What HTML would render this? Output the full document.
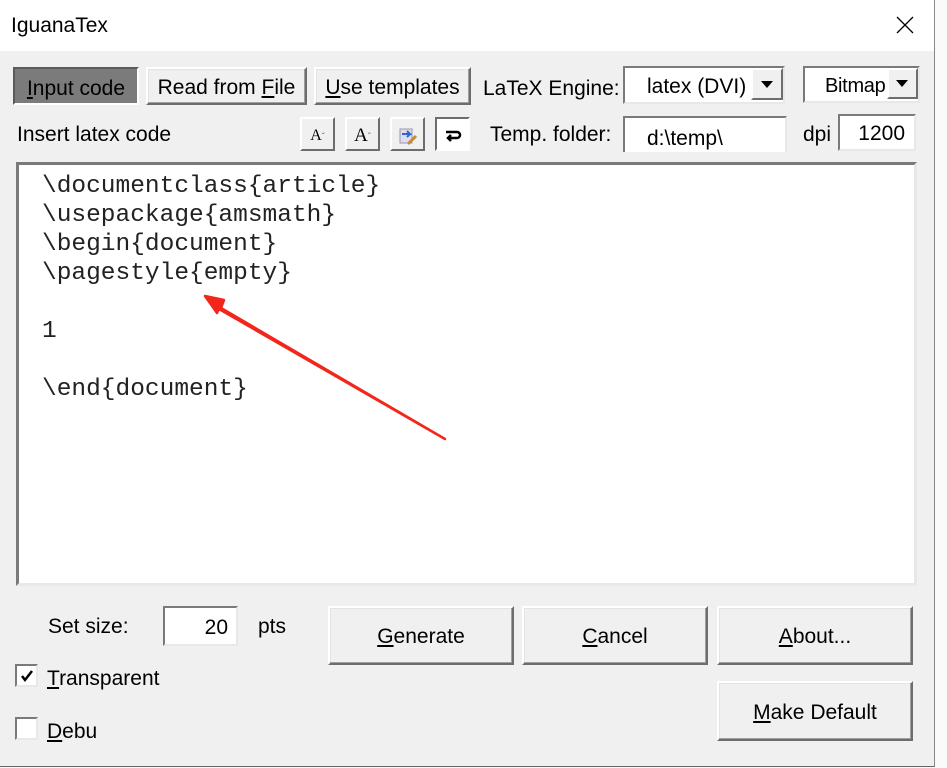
<!DOCTYPE html>
<html><head><meta charset="utf-8"><style>
*{box-sizing:border-box;margin:0;padding:0}
body{width:947px;height:768px;background:#fafafa;position:relative;overflow:hidden;font-family:"Liberation Sans",sans-serif;font-size:21px;color:#000}
.win{position:absolute;left:0;top:0;width:935px;height:767px;background:#f0f0f0;border-right:1px solid #888;border-bottom:1px solid #666}
.title{position:absolute;left:0;top:0;width:934px;height:51px;background:#fff}
.a{position:absolute;white-space:nowrap}
.btn{position:absolute;background:#f0f0f0;border:2px solid;border-color:#fff #6d6d6d #6d6d6d #fff;box-shadow:inset -1px -1px 0 #a0a0a0, inset 1px 1px 0 #e3e3e3;display:flex;align-items:center;justify-content:center;font-size:21px;padding-top:3px}
.inp{position:absolute;background:#fff;border:2px solid;border-color:#7a7a7a #e8e8e8 #e8e8e8 #7a7a7a;font-size:21px;display:flex;align-items:center;padding-top:3px}
u{text-decoration:underline}
.code{position:absolute;left:42px;top:172px;font-family:"Liberation Mono",monospace;font-size:24.5px;line-height:29px;color:#222;white-space:pre}
.dd{position:absolute;background:#f0f0f0;border:2px solid;border-color:#fff #6d6d6d #6d6d6d #fff}
</style></head><body>
<div class="win">
<div class="title"></div>
<div class="a" style="left:11px;top:14px;font-size:21px">IguanaTex</div>
<svg class="a" style="left:896px;top:16px" width="18" height="18"><path d="M1 1L17 17M17 1L1 17" stroke="#000" stroke-width="1.3"/></svg>

<div class="btn" style="left:13px;top:67px;width:126px;height:38px;background:#7b7b7b;border-color:#5a5a5a #fff #fff #5a5a5a;box-shadow:none;padding-top:6px"><span><u>I</u>nput code</span></div>
<div class="btn" style="left:146px;top:67px;width:161px;height:38px"><span>Read from <u>F</u>ile</span></div>
<div class="btn" style="left:314px;top:67px;width:157px;height:38px"><span><u>U</u>se templates</span></div>
<div class="a" style="left:483px;top:77px">LaTeX Engine:</div>
<div class="inp" style="left:623px;top:66px;width:162px;height:38px;padding-left:22px">latex (DVI)</div>
<div class="dd" style="left:751px;top:68px;width:32px;height:32px"><svg width="28" height="28"><path d="M8 11h12l-6 7z" fill="#000"/></svg></div>
<div class="inp" style="left:803px;top:66px;width:117px;height:37px;padding-left:20px;font-size:20px;letter-spacing:-0.3px">Bitmap</div>
<div class="dd" style="left:887px;top:68px;width:31px;height:31px"><svg width="27" height="27"><path d="M7 10h12l-6 7z" fill="#000"/></svg></div>

<div class="a" style="left:17px;top:123px">Insert latex code</div>
<div class="btn" style="left:300px;top:117px;width:35px;height:34px;font-family:'Liberation Serif',serif;font-size:16px;box-shadow:none">A<span style="font-size:9px;color:#36c;vertical-align:top">ˇ</span></div>
<div class="btn" style="left:345px;top:117px;width:35px;height:34px;font-family:'Liberation Serif',serif;font-size:19px;box-shadow:none">A<span style="font-size:9px;color:#36c;vertical-align:top">ˆ</span></div>
<div class="btn" style="left:390px;top:117px;width:35px;height:34px;box-shadow:none"><svg width="20" height="20"><rect x="2" y="3" width="12" height="14" fill="#dde" stroke="#99a"/><path d="M4 8h8l-3-3M12 8l-3 3" stroke="#36c" stroke-width="2" fill="none"/><path d="M10 18l8-8" stroke="#c83" stroke-width="3"/></svg></div>
<div class="btn" style="left:435px;top:117px;width:35px;height:34px;border-color:#6d6d6d #fff #fff #6d6d6d;box-shadow:none;background:#fff"><svg width="18" height="14"><path d="M2 3h11a3 3 0 0 1 0 6H5M7 6l-3 3 3 3" stroke="#000" stroke-width="2.5" fill="none"/></svg></div>
<div class="a" style="left:490px;top:123px">Temp. folder:</div>
<div class="inp" style="left:623px;top:116px;width:164px;height:36px;padding-left:22px;border-bottom:none;padding-top:8px">d:\temp\</div>
<div class="a" style="left:803px;top:123px">dpi</div>
<div class="inp" style="left:838px;top:114px;width:78px;height:37px;justify-content:flex-end;padding-right:9px">1200</div>

<div class="inp" style="left:16px;top:162px;width:901px;height:424px;border-width:3px;border-color:#7a7a7a #e8e8e8 #e8e8e8 #7a7a7a"></div>
<div class="code">\documentclass{article}
\usepackage{amsmath}
\begin{document}
\pagestyle{empty}

1

\end{document}</div>
<svg class="a" style="left:0;top:0" width="947" height="768"><path d="M445 439L221 308L224 300L205 296L217 313L219 309Z" fill="#f2261a" stroke="#f2261a" stroke-width="2.5" stroke-linejoin="round"/></svg>

<div class="a" style="left:48px;top:615px">Set size:</div>
<div class="inp" style="left:163px;top:606px;width:75px;height:40px;justify-content:flex-end;padding-right:8px">20</div>
<div class="a" style="left:258px;top:615px">pts</div>
<div class="btn" style="left:328px;top:606px;width:186px;height:59px"><span><u>G</u>enerate</span></div>
<div class="btn" style="left:522px;top:606px;width:186px;height:59px"><span><u>C</u>ancel</span></div>
<div class="btn" style="left:717px;top:606px;width:196px;height:59px"><span><u>A</u>bout...</span></div>
<div class="btn" style="left:717px;top:681px;width:196px;height:60px"><span><u>M</u>ake Default</span></div>

<div class="inp" style="left:15px;top:664px;width:23px;height:23px;justify-content:center;padding-top:0"><svg width="14" height="14"><path d="M2 7l3 4 7-9" stroke="#000" stroke-width="2.5" fill="none"/></svg></div>
<div class="a" style="left:47px;top:667px"><u>T</u>ransparent</div>
<div class="inp" style="left:15px;top:717px;width:23px;height:23px"></div>
<div class="a" style="left:47px;top:720px"><u>D</u>ebu</div>
</div>
</body></html>
